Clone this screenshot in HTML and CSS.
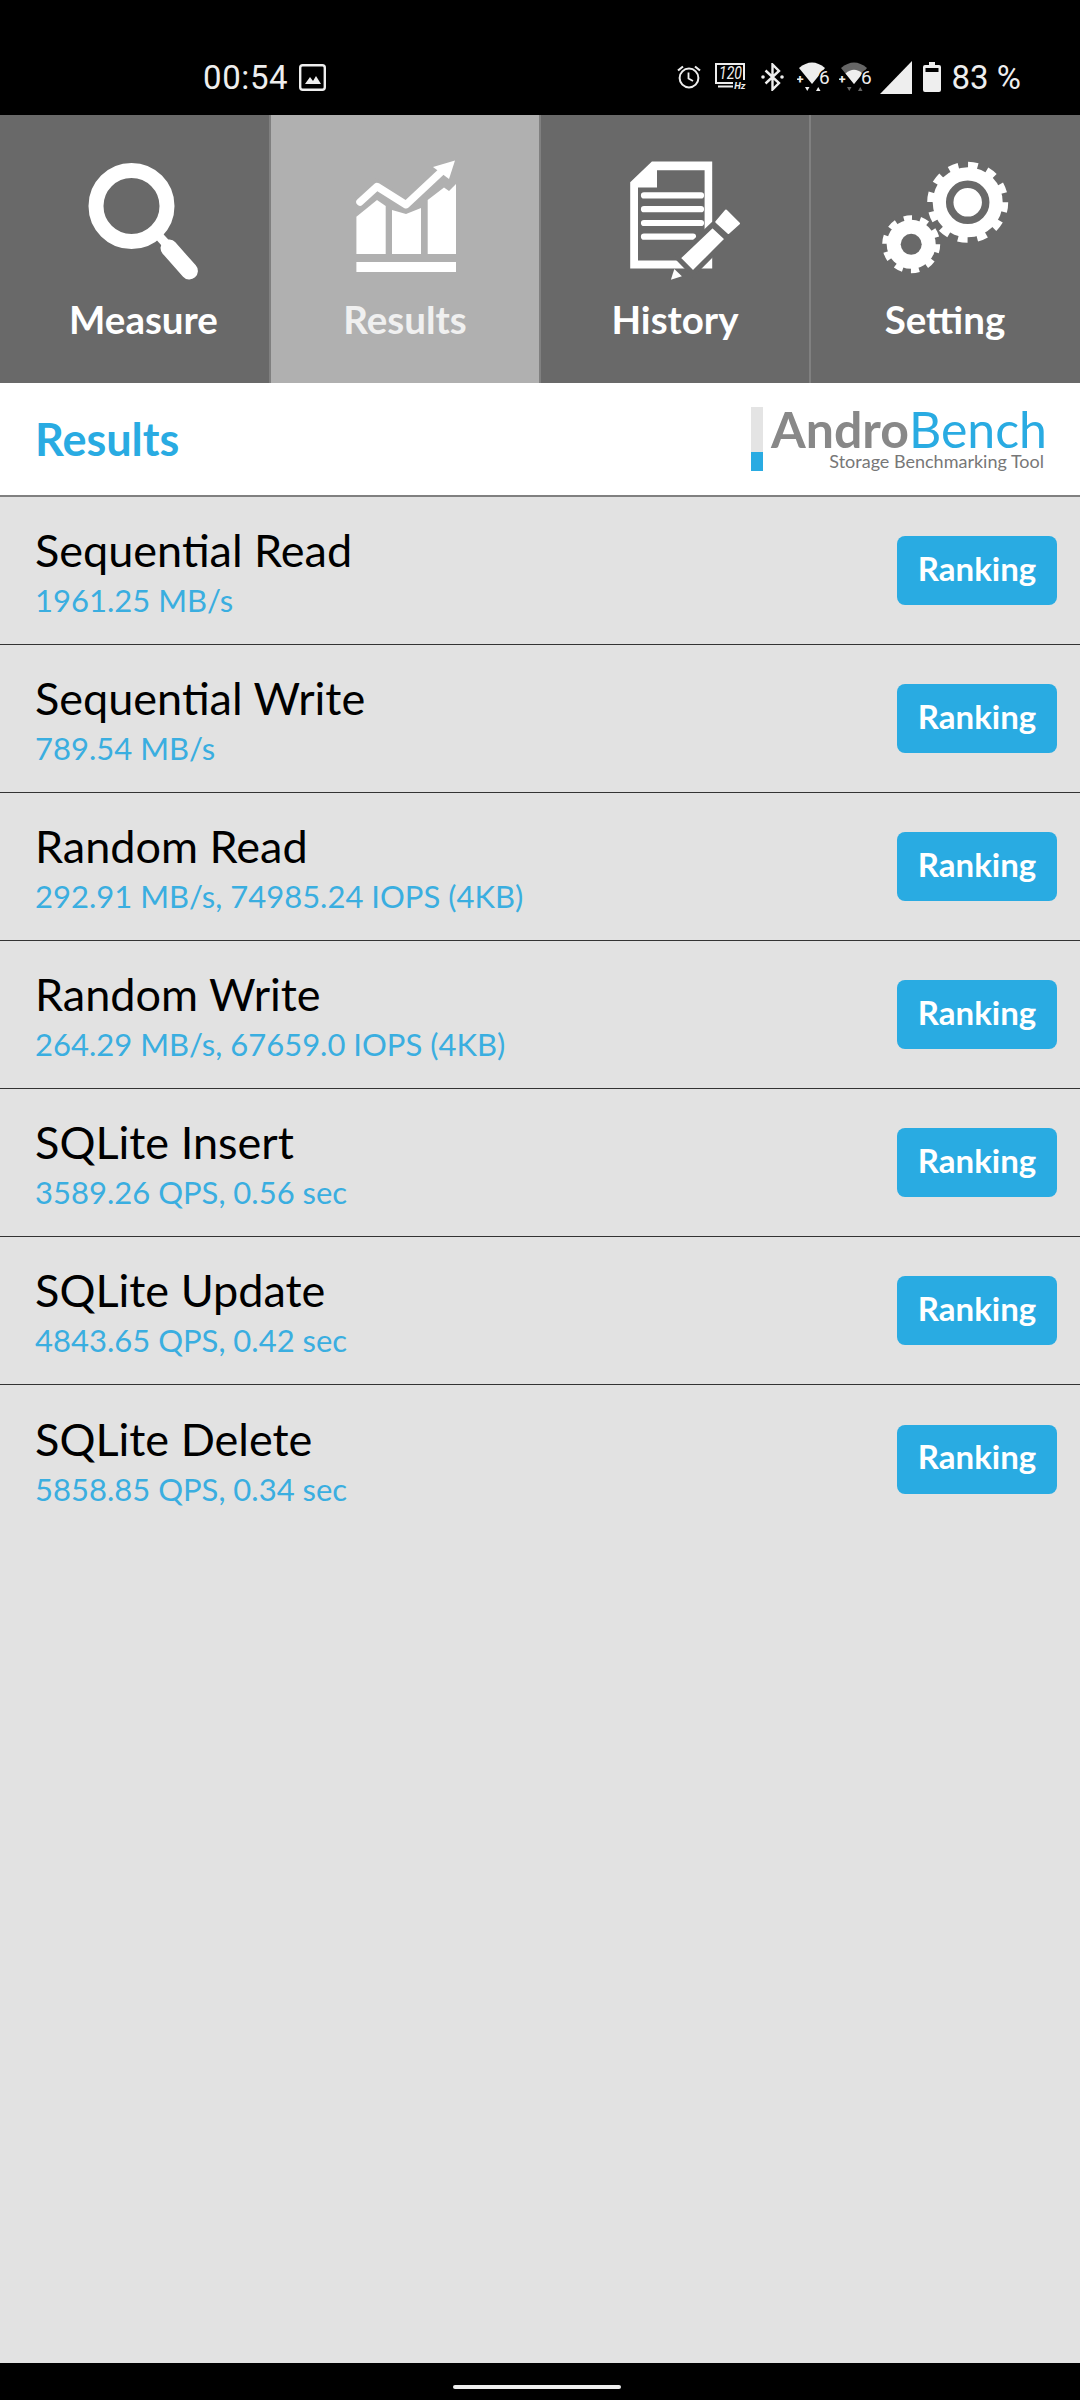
FILE: index.html

```html
<!DOCTYPE html>
<html lang="en">
<head>
    <meta charset="UTF-8">
    <meta name="viewport" content="width=device-width, initial-scale=1.0">
    <title>AndroBench Results</title>
    <link rel="stylesheet" href="styles.css">
</head>
<body>
    <div class="app">
        <!-- Android status bar -->
        <div class="status-bar">
            <div class="status-left">
                <span class="time">00:54</span>
                <svg width="27" height="27" viewBox="0 0 27 27">
                    <rect x="1.200" y="1.200" width="24.600" height="24.600" rx="2.500" fill="none" stroke="#eee" stroke-width="2.400"/>
                    <path d="M6 20L11 13L14 17L17 12L22 20Z" fill="#eee"/>
                </svg>
            </div>
            <div class="status-right">
                <svg width="24" height="24" viewBox="0 0 24 24">
                    <circle cx="12" cy="13" r="9.400" fill="none" stroke="#eee" stroke-width="2"/>
                    <path d="M11.500 7.500V13.500L16 16" fill="none" stroke="#eee" stroke-width="1.800"/>
                    <path d="M1 5.500L6 1.500M23 5.500L18 1.500" stroke="#eee" stroke-width="2.200"/>
                </svg>
                <svg class="ic-hz" width="32" height="28" viewBox="0 0 32 28">
                    <path d="M18 20H1V1H29V17" fill="none" stroke="#eee" stroke-width="2"/>
                    <path d="M3 23.500H18" stroke="#eee" stroke-width="2"/>
                    <text x="4" y="16" class="svg-hz" textLength="23" lengthAdjust="spacingAndGlyphs">120</text>
                    <text x="30.500" y="26" class="svg-hz-small" text-anchor="end">Hz</text>
                </svg>
                <svg class="ic-bt" width="23" height="28" viewBox="0 0 23 28">
                    <path d="M4.500 7.500L18 20L11.500 26.500V1.500L18 8L4.500 20.500" fill="none" stroke="#eee" stroke-width="2.400"/>
                    <circle cx="2" cy="14" r="1.800" fill="#eee"/>
                    <circle cx="21" cy="14" r="1.800" fill="#eee"/>
                </svg>
                <svg class="ic-net" width="33" height="30" viewBox="0 0 33 30">
                    <path d="M2 6Q15 -5 28 6L15 22Z" fill="#eee"/>
                    <path d="M8 25H12.500L10.250 29Z M19 29H23.500L21.250 25Z" fill="#eee"/>
                    <text x="-0.500" y="22" class="svg-net">+</text>
                    <text x="22" y="22" class="svg-net-num">6</text>
                </svg>
                <svg class="ic-net-dim" width="33" height="30" viewBox="0 0 33 30">
                    <path d="M2 6Q15 -5 28 6L15 22Z" fill="#666"/>
                    <path d="M6.500 11.500Q15 4 23.500 11.500L15 22Z" fill="#eee"/>
                    <path d="M8 25H12.500L10.250 29Z M19 29H23.500L21.250 25Z" fill="#666"/>
                    <text x="-0.500" y="22" class="svg-net">+</text>
                    <text x="22" y="22" class="svg-net-num">6</text>
                </svg>
                <svg width="32" height="33" viewBox="0 0 32 33">
                    <path d="M32 0V33H0Z" fill="#eee"/>
                </svg>
                <svg class="ic-battery" width="18" height="30" viewBox="0 0 18 30">
                    <path d="M6 0H12V3H16Q18 3 18 5V28Q18 30 16 30H2Q0 30 0 28V5Q0 3 2 3H6Z" fill="#eee"/>
                    <rect x="2.500" y="6" width="13" height="4" fill="#000"/>
                </svg>
                <span class="battery">83 %</span>
            </div>
        </div>

        <!-- main tabs -->
        <div class="tabs">
            <div class="tab tab-first">
                <svg class="tab-icon" width="130" height="130" viewBox="0 0 130 130">
                    <circle cx="52.500" cy="56" r="35.500" fill="none" stroke="#fff" stroke-width="15"/>
                    <path d="M80 86L90 97" stroke="#fff" stroke-width="9"/>
                    <path d="M90 98L110.400 121" stroke="#fff" stroke-width="17" stroke-linecap="round"/>
                </svg>
                <span class="tab-label">Measure</span>
            </div>
            <div class="tab tab-active">
                <svg class="tab-icon" width="130" height="130" viewBox="0 0 130 130">
                    <path d="M16.400 66.700L37 50L45.700 56V104H16.400Z" fill="#fff"/>
                    <path d="M52 60L66 64L81 58V104H52Z" fill="#fff"/>
                    <path d="M87.700 50L104 37.500L109 41L116 34V104H87.700Z" fill="#fff"/>
                    <rect x="16.400" y="112" width="99.600" height="10" fill="#fff"/>
                    <path d="M20 52L37 36.500L66 54.700L101 22" fill="none" stroke="#b0b0b0" stroke-width="13"/>
                    <path d="M20 52L37 36.500L66 54.700L101 22" fill="none" stroke="#fff" stroke-width="7.500" stroke-linecap="round" stroke-linejoin="round"/>
                    <path d="M115 10.600L93 17L109 29Z" fill="#fff"/>
                </svg>
                <span class="tab-label">Results</span>
            </div>
            <div class="tab">
                <svg class="tab-icon" width="130" height="130" viewBox="0 0 130 130">
                    <path fill-rule="evenodd" fill="#fff" d="M20.200 32.300L41.900 11.600H102.200V118.400H20.200Z M47 20.300V37.500H28V110.500H94.600V20.300Z"/>
                    <path d="M34 45.400H91M34 59.200H91M34 73H91M34 86.700H83" stroke="#fff" stroke-width="6.200" stroke-linecap="round"/>
                    <path d="M67.700 108L102.500 75L117.500 89L83 123.600Z" fill="#fff" stroke="#696969" stroke-width="5"/>
                    <path d="M60.900 129.800L64.300 119L71.900 126.300Z" fill="#fff"/>
                    <path d="M106.300 72L116 60.500L129 73.500L118.400 83Z" fill="#fff" stroke="#fff" stroke-width="2" stroke-linejoin="round"/>
                </svg>
                <span class="tab-label">History</span>
            </div>
            <div class="tab">
                <svg class="tab-icon" width="130" height="130" viewBox="0 0 130 130">
                    <circle cx="87.700" cy="52.300" r="35" fill="#fff"/>
                    <circle cx="87.700" cy="52.300" r="37" fill="none" stroke="#fff" stroke-width="7" stroke-dasharray="9.700 9.680"/>
                    <circle cx="87.700" cy="52.300" r="18" fill="none" stroke="#696969" stroke-width="7.500"/>
                    <circle cx="31.200" cy="94.300" r="24.500" fill="#fff"/>
                    <circle cx="31.200" cy="94.300" r="26" fill="none" stroke="#fff" stroke-width="6" stroke-dasharray="8.170 8.170"/>
                    <circle cx="31.200" cy="94.300" r="10.500" fill="#696969"/>
                </svg>
                <span class="tab-label">Setting</span>
            </div>
        </div>

        <!-- page title + logo -->
        <div class="page-header">
            <h1>Results</h1>
            <div class="logo">
                <div class="logo-bar"><div class="logo-bar-fill"></div></div>
                <div class="logo-text">
                    <div class="logo-name"><b>Andro</b><span>Bench</span></div>
                    <div class="logo-sub">Storage Benchmarking Tool</div>
                </div>
            </div>
        </div>

        <!-- result rows -->
        <ul class="results">
            <li class="result-row">
                <div>
                    <div class="result-name">Sequential Read</div>
                    <div class="result-value">1961.25 MB/s</div>
                </div>
                <button class="ranking-btn" type="button">Ranking</button>
            </li>
            <li class="result-row">
                <div>
                    <div class="result-name">Sequential Write</div>
                    <div class="result-value">789.54 MB/s</div>
                </div>
                <button class="ranking-btn" type="button">Ranking</button>
            </li>
            <li class="result-row">
                <div>
                    <div class="result-name">Random Read</div>
                    <div class="result-value">292.91 MB/s, 74985.24 IOPS (4KB)</div>
                </div>
                <button class="ranking-btn" type="button">Ranking</button>
            </li>
            <li class="result-row">
                <div>
                    <div class="result-name">Random Write</div>
                    <div class="result-value">264.29 MB/s, 67659.0 IOPS (4KB)</div>
                </div>
                <button class="ranking-btn" type="button">Ranking</button>
            </li>
            <li class="result-row">
                <div>
                    <div class="result-name">SQLite Insert</div>
                    <div class="result-value">3589.26 QPS, 0.56 sec</div>
                </div>
                <button class="ranking-btn" type="button">Ranking</button>
            </li>
            <li class="result-row">
                <div>
                    <div class="result-name">SQLite Update</div>
                    <div class="result-value">4843.65 QPS, 0.42 sec</div>
                </div>
                <button class="ranking-btn" type="button">Ranking</button>
            </li>
            <li class="result-row result-row-last">
                <div>
                    <div class="result-name">SQLite Delete</div>
                    <div class="result-value">5858.85 QPS, 0.34 sec</div>
                </div>
                <button class="ranking-btn" type="button">Ranking</button>
            </li>
        </ul>

        <div class="nav-bar">
            <div class="nav-pill"></div>
        </div>
    </div>
</body>
</html>
```

FILE: styles.css

```css
body {
    margin: 0;
    padding: 0;
    font-family: 'Lato', 'Noto Sans', sans-serif;
    background-color: #000;
}

.app {
    width: 1080px;
    height: 2400px;
    display: flex;
    flex-direction: column;
    background-color: #e2e2e2;
    overflow: hidden;
}

/* status bar */
.status-bar {
    height: 115px;
    flex: none;
    background-color: #000;
    color: #eee;
    display: flex;
    justify-content: space-between;
    align-items: center;
    padding: 39px 59px 0 203px;
    box-sizing: border-box;
    font-family: 'Roboto', sans-serif;
    font-size: 33px;
}

.status-left,
.status-right {
    display: flex;
    align-items: center;
}

.status-left {
    gap: 11px;
}

.status-right {
    gap: 8px;
}

.time {
    letter-spacing: 0.6px;
}

/* the icons are not evenly spaced on the phone */
.ic-hz {
    margin-left: 6px;
}

.ic-bt {
    margin-left: 6px;
}

.ic-net {
    margin-left: 5px;
}

.ic-net-dim {
    margin-left: 1px;
}

.ic-battery,
.battery {
    margin-left: 3px;
}

.svg-hz {
    font-family: 'Roboto', sans-serif;
    font-size: 18px;
    font-style: italic;
    fill: #eee;
}

.svg-hz-small {
    font-family: 'Roboto', sans-serif;
    font-size: 9.500px;
    font-weight: bold;
    font-style: italic;
    fill: #eee;
}

.svg-net {
    font-family: 'Roboto', sans-serif;
    font-size: 13px;
    font-weight: bold;
    fill: #eee;
    stroke: #000;
    stroke-width: 2px;
    paint-order: stroke;
}

.svg-net-num {
    font-family: 'Roboto', sans-serif;
    font-size: 19px;
    fill: #eee;
    stroke: #000;
    stroke-width: 3px;
    paint-order: stroke;
}

/* tabs */
.tabs {
    height: 268px;
    flex: none;
    display: flex;
    background-color: #696969;
}

.tab {
    width: 270px;
    box-sizing: border-box;
    display: flex;
    flex-direction: column;
    align-items: center;
    padding-top: 35px;
    border-left: 2px solid #808080;
}

.tab-first {
    width: 269px;
    border-left: none;
    padding-left: 18px;
}

.tab-active {
    background-color: #b0b0b0;
}

.tab-icon {
    display: block;
}

.tab-label {
    color: #fff;
    font-size: 38.500px;
    font-weight: 700;
    line-height: 50px;
    margin-top: 14px;
}

.tab-active .tab-label {
    color: #f0f0f0;
}

/* header */
.page-header {
    height: 114px;
    flex: none;
    background-color: #fff;
    border-bottom: 2px solid #808080;
    box-sizing: border-box;
    display: flex;
    justify-content: space-between;
    align-items: center;
    padding: 0 33px 0 35px;
}

h1 {
    margin: 0;
    font-size: 45px;
    font-weight: 700;
    color: #29abe2;
}

.logo {
    display: flex;
    align-items: stretch;
    gap: 8px;
}

.logo-bar {
    width: 12px;
    height: 64px;
    background-color: #e4e4e4;
    display: flex;
    align-items: flex-end;
}

.logo-bar-fill {
    width: 12px;
    height: 19px;
    background-color: #29abe2;
}

.logo-text {
    text-align: right;
}

.logo-name {
    font-size: 50px;
    line-height: 44px;
    color: #29abe2;
}

.logo-name b,
.logo-name span {
    display: inline-block;
    line-height: 44px;
}

.logo-name b {
    color: #888;
}

.logo-sub {
    font-size: 18px;
    line-height: 20px;
    padding-right: 3px;
    color: #777;
}

/* results list */
.results {
    list-style: none;
    margin: 0;
    padding: 0;
}

.result-row {
    height: 148px;
    box-sizing: border-box;
    border-bottom: 1px solid #333;
    display: flex;
    justify-content: space-between;
    align-items: center;
    padding: 0 23px 0 35px;
}

.result-row-last {
    border-bottom: none;
}

.result-name {
    font-size: 45px;
    line-height: 56px;
    color: #000;
}

.result-value {
    font-size: 31px;
    line-height: 38px;
    margin-top: 3px;
    color: #3aaee0;
}

.ranking-btn {
    width: 160px;
    height: 69px;
    border: none;
    border-radius: 8px;
    background-color: #29abe2;
    color: #fff;
    font-family: inherit;
    font-size: 33px;
    font-weight: 700;
    padding: 0 0 6px;
}

/* bottom nav */
.nav-bar {
    margin-top: auto;
    height: 37px;
    flex: none;
    background-color: #000;
    display: flex;
    justify-content: center;
    padding: 22px 6px 0 0;
    box-sizing: border-box;
}

.nav-pill {
    width: 168px;
    height: 4px;
    border-radius: 2px;
    background-color: #eee;
}
```
